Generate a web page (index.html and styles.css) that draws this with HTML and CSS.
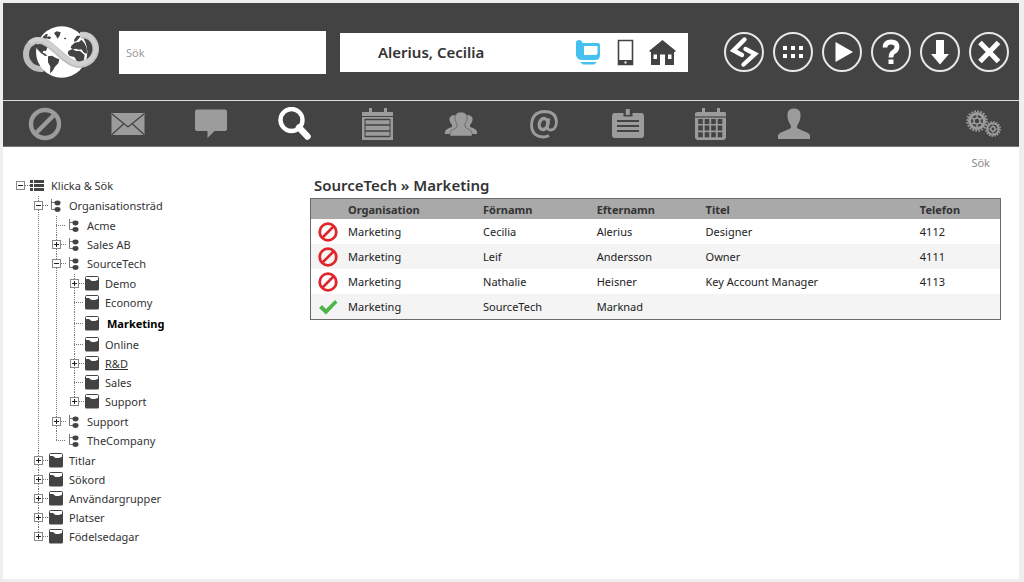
FILE: index.html
```
<!DOCTYPE html>
<html lang="sv">
<head>
<meta charset="utf-8">
<meta name="viewport" content="width=device-width, initial-scale=1">
<title>SourceTech – Klicka &amp; Sök</title>
<link rel="stylesheet" href="styles.css">
</head>
<body>
<svg class="sprite" aria-hidden="true">
  <symbol id="folder" viewBox="0 0 15 15"><path d="M1.500 4V1.500Q1.500 .5 2.500 .5h11q1 0 1 1V6" fill="#fff" stroke="#434343"/><path d="M1 3h4l2.500 2H11l4-1.500V13q0 1.500-1.500 1.500h-11Q1 14.500 1 13z" fill="#434343"/></symbol>
  <symbol id="branch" viewBox="0 0 15 15"><path d="M3.500 1v10.500H7M3.500 4.500H7" fill="none" stroke="#777"/><ellipse cx="9.500" cy="5" rx="3" ry="2.400" fill="#434343"/><ellipse cx="9.500" cy="11.500" rx="3" ry="2.400" fill="#434343"/></symbol>
  <symbol id="deny" viewBox="0 0 20 20"><circle cx="10" cy="10" r="8.300" fill="none" stroke="#e0262d" stroke-width="2.800"/><path d="M4.500 15.500l11-11" stroke="#e0262d" stroke-width="2.600"/></symbol>
</svg>
<div class="frame">
  <header class="header">
    <a class="logo" href="#" aria-label="Start">
      <svg viewBox="36 36 234 162">
        <path d="M100 168C70 170 48 150 48 124 48 98 66 82 88 82" fill="none" stroke="#bdbdbd" stroke-width="18"/>
        <circle cx="155" cy="117" r="77" fill="#fff"/>
        <g fill="#434343">
          <path d="M78 96Q92 88 112 92l8 6-8 6-4 10-8-1-2 6 8 3 6 7-8-1-12-9-10-10-4-6z"/>
          <path d="M98 72l10-9 6 1-4 8 8-2 6 4-6 5-8-3-10 5z"/>
          <path d="M132 60l8-5 12 3-3 10-6 9-5-8z"/>
          <path d="M114 130l12-2 12 7 10 4-3 12-10 10-8 14-7 6 1-20-7-13z"/>
          <path d="M192 80l9-12 12 0-6 8-8 9-6 1z"/>
          <path d="M184 98l10-9 14-3 6-6 9 10 7 14 1 18-9-3-8-10-8 1-8-3-8 2-8-4z"/>
          <path d="M175 114l12-6 11 6 12 0 14 12-2 14-9 10-12-5-8-13-14-3-6-8z"/>
          <path d="M163 74l6 1-2 4-5-1z"/>
        </g>
        <path d="M211 67C246 62 259 92 257 112 253 142 226 158 200 154 160 148 125 84 88 82 76 81 66 86 60 93" fill="none" stroke="#c0c0c0" stroke-width="20"/>
        <path d="M211 66C246 61 259 92 257 111 253 140 226 156 200 152 160 146 125 82 88 80 76 79 66 84 60 91" fill="none" stroke="#d0d0d0" stroke-width="12"/>
      </svg>
    </a>
    <input class="search" type="search" placeholder="Sök" aria-label="Sök">
    <div class="user">
      <span class="user-name">Alerius, Cecilia</span>
      <button class="plain" type="button" aria-label="Telefon"><svg width="27" height="27" viewBox="0 0 27 27"><path d="M4 1q3 0 3.500 3H23q2 0 2 2v10q0 5-5 5H7q-5 0-6-5V4q0-3 3-3z" fill="#45c1f0"/><path d="M9 7h13.500v7q0 2-2 2H9z" fill="#fff"/><path d="M5 23h17l-3 2.500H8z" fill="#45c1f0"/></svg></button>
      <button class="plain" type="button" aria-label="Mobil"><svg width="17" height="27" viewBox="0 0 17 27"><path d="M1.500 1.500h14v24h-14z" fill="#fff" stroke="#434343" stroke-width="1.600"/><path d="M1 21h15v5H1z" fill="#434343"/><path d="M7.500 22.500h2v2h-2z" fill="#fff"/></svg></button>
      <button class="plain" type="button" aria-label="Hem"><svg width="27" height="27" viewBox="0 0 27 27"><path d="M13.500 1L27 12l-1.500 1H25v13h-9V15.500h-5V26H2V13h-.5L0 12z" fill="#434343"/><path d="M4.500 15.500H8V20H4.500zM19 15.500h3.500V20H19z" fill="#fff"/></svg></button>
    </div>
    <div class="actions">
      <button class="round" type="button" aria-label="SourceTech"><svg viewBox="0 0 40 40"><path d="M20.500 7.500L9.500 18.500l8.500 4.500M19.500 32.500l11.500-10.500-9.500-5" fill="none" stroke="#fff" stroke-width="4.400" stroke-linecap="round"/></svg></button>
      <button class="round" type="button" aria-label="Knappsats"><svg viewBox="0 0 40 40"><path d="M10 14h4v4h-4zm8 0h4v4h-4zm8 0h4v4h-4zM10 22h4v4h-4zm8 0h4v4h-4zm8 0h4v4h-4z" fill="#fff"/></svg></button>
      <button class="round" type="button" aria-label="Spela"><svg viewBox="0 0 40 40"><path d="M13.500 10L31 20 13.500 30z" fill="#fff"/></svg></button>
      <button class="round" type="button" aria-label="Hjälp"><svg viewBox="0 0 40 40"><path d="M14 15.500q0-5.500 6-5.500t6 5q0 3-3.500 5Q20 21.500 20 25.500" fill="none" stroke="#fff" stroke-width="4.800"/><path d="M17.500 27.500h5v4.500h-5z" fill="#fff"/></svg></button>
      <button class="round" type="button" aria-label="Ladda ner"><svg viewBox="0 0 40 40"><path d="M16 8h8v14h5l-9 10.500L11 22h5z" fill="#fff"/></svg></button>
      <button class="round" type="button" aria-label="Stäng"><svg viewBox="0 0 40 40"><path d="M11 10.500l18.500 19M29.500 10.500l-18.500 19" stroke="#fff" stroke-width="5"/></svg></button>
    </div>
  </header>
  <nav class="nav" aria-label="Huvudmeny">
    <a href="#" aria-label="Hänvisning"><svg viewBox="0 0 34 34"><circle cx="17" cy="17" r="14" fill="none" stroke="currentColor" stroke-width="4.400"/><path d="M8.500 25.500l17-17" stroke="currentColor" stroke-width="4.400"/></svg></a>
    <a href="#" aria-label="Meddelande"><svg viewBox="0 0 34 34"><path d="M.5 6h33v22H.5z" fill="currentColor"/><path d="M1 7l16 13L33 7M1 27.500l12-11M33 27.500l-12-11" fill="none" stroke="#434343" stroke-width="1.300"/></svg></a>
    <a href="#" aria-label="Chatt"><svg viewBox="0 0 34 34"><path d="M3 2.500h28q2 0 2 2V22q0 2-2 2H20.500L13.500 31v-7H3q-2 0-2-2V4.500q0-2 2-2z" fill="currentColor"/></svg></a>
    <a class="current" href="#" aria-label="Sök" aria-current="page"><svg viewBox="0 0 34 34"><circle cx="13.500" cy="13" r="11" fill="none" stroke="currentColor" stroke-width="4.400"/><path d="M21 20.500L29.500 29.500" stroke="currentColor" stroke-width="6.500" stroke-linecap="round"/></svg></a>
    <a href="#" aria-label="Lista"><svg viewBox="0 0 34 34"><path d="M1 5h31v28H1zM8 1h3v4H8zM23 1h3v4h-3z" fill="currentColor"/><path d="M1 9.500h31" stroke="#434343" stroke-width="1"/><path d="M4 12.500h25M4 18h25M4 24h25M4 29.500h25" stroke="#434343" stroke-width="1.600"/><path d="M4 12v18M29 12v18" stroke="#434343"/></svg></a>
    <a href="#" aria-label="Grupper"><svg viewBox="0 0 34 34"><path d="M1 27q-1-4 4-6l3-1v-2q-4-5-2-8 4-4 8 0v13l-4 4zM33 27q1-4-4-6l-3-1v-2q4-5 2-8-4-4-8 0v13l4 4z" fill="currentColor"/><path d="M6 29q-1-5 4-7l3-2v-3q-3-4-2-8Q12 5 17 5t6 4q1 4-2 8v3l3 2q5 2 4 7z" fill="currentColor" stroke="#434343" stroke-width=".5"/></svg></a>
    <a href="#" aria-label="E-post"><svg viewBox="0 0 34 34"><path d="M22 28.500Q19.500 30 16 30 4.500 29 4.500 18 5 5 17.500 4.500 29 4.500 29.500 15q-.5 8-6 8-3.500 0-3-4l1.500-7.500" fill="none" stroke="currentColor" stroke-width="2.800"/><ellipse cx="16.500" cy="17" rx="4.200" ry="5.600" transform="rotate(15 16.500 17)" fill="none" stroke="currentColor" stroke-width="3.400"/></svg></a>
    <a href="#" aria-label="Bricka"><svg viewBox="0 0 34 34"><path d="M4 6h26q3 0 3 3v19q0 3-3 3H4q-3 0-3-3V9q0-3 3-3z" fill="currentColor"/><path d="M12.500 5h9v4.500h-9z" fill="#434343"/><path d="M14.800 2h4v6h-4z" fill="currentColor"/><path d="M6 14h22M6 19h22M6 24h22" stroke="#434343" stroke-width="2"/></svg></a>
    <a href="#" aria-label="Kalender"><svg viewBox="0 0 34 34"><path d="M3 5h28l1 1v25l-2 2H3l-2-2V6zM8 1h3v4H8zM23 1h3v4h-3z" fill="currentColor"/><path d="M1 10h31" stroke="#434343" stroke-width="1.200"/><path d="M6.500 12v19M13 12v19M19.500 12v19M26 12v19" stroke="#434343" stroke-width="4.600" stroke-dasharray="5 1.600"/></svg></a>
    <a href="#" aria-label="Profil"><svg viewBox="0 0 34 34"><path d="M1 32v-4l2-2 9-4q3-1 1.500-4-3.500-5-3-11 .5-5.500 6.500-5.500t6.500 5.500q.5 6-3 11Q19 21 22 22l9 4 2 2v4z" fill="currentColor"/></svg></a>
    <a class="settings" href="#" aria-label="Inställningar"><svg viewBox="0 0 36 34"><g fill="none" stroke="currentColor"><circle cx="12" cy="14" r="7.500" stroke-width="3"/><circle cx="12" cy="14" r="9.800" stroke-width="2" stroke-dasharray="1.700 1.380"/><circle cx="12" cy="14" r="3" stroke-width="1.500"/><path d="M12 11V7M12 17v4M9.400 12.500L6 10.500M14.600 12.500l3.400-2M9.400 15.500L6 17.500M14.600 15.500l3.400 2" stroke-width="1.500"/><circle cx="28" cy="22" r="5.700" stroke-width="2"/><circle cx="28" cy="22" r="7.200" stroke-width="1.500" stroke-dasharray="1.500 1.330"/><circle cx="28" cy="22" r="2.200" stroke-width="1.500"/><path d="M28 16v4M28 24v4M22 22h4M30 22h4"/></g></svg></a>
  </nav>
  <div class="subbar"><a href="#">Sök</a></div>
  <main class="main">
    <nav class="tree" aria-label="Klicka &amp; Sök">
      <ul>
        <li>
          <div class="row"><button class="toggle" type="button" aria-expanded="true" aria-label="Fäll ihop"></button><i class="stub"></i><svg class="icon" viewBox="0 0 15 15"><path d="M0 2h3v3H0zM4 2h10v3H4zM0 6h3v3H0zM4 6h10v3H4zM0 10h3v3H0zM4 10h10v3H4z" fill="#434343"/></svg><a href="#">Klicka &amp; Sök</a></div>
          <ul>
            <li>
              <div class="row"><button class="toggle" type="button" aria-expanded="true" aria-label="Fäll ihop"></button><i class="stub"></i><svg class="icon"><use href="#branch"/></svg><a href="#">Organisationsträd</a></div>
              <ul>
                <li><div class="row"><i class="stub leaf"></i><svg class="icon"><use href="#branch"/></svg><a href="#">Acme</a></div></li>
                <li><div class="row"><button class="toggle" type="button" aria-expanded="false" aria-label="Fäll ut"></button><i class="stub"></i><svg class="icon"><use href="#branch"/></svg><a href="#">Sales AB</a></div></li>
                <li>
                  <div class="row"><button class="toggle" type="button" aria-expanded="true" aria-label="Fäll ihop"></button><i class="stub"></i><svg class="icon"><use href="#branch"/></svg><a href="#">SourceTech</a></div>
                  <ul>
                    <li><div class="row"><button class="toggle" type="button" aria-expanded="false" aria-label="Fäll ut"></button><i class="stub"></i><svg class="icon"><use href="#folder"/></svg><a href="#">Demo</a></div></li>
                    <li><div class="row"><i class="stub leaf"></i><svg class="icon"><use href="#folder"/></svg><a href="#">Economy</a></div></li>
                    <li><div class="row selected"><i class="stub leaf"></i><svg class="icon"><use href="#folder"/></svg><a href="#" aria-current="true">Marketing</a></div></li>
                    <li><div class="row"><i class="stub leaf"></i><svg class="icon"><use href="#folder"/></svg><a href="#">Online</a></div></li>
                    <li><div class="row"><button class="toggle" type="button" aria-expanded="false" aria-label="Fäll ut"></button><i class="stub"></i><svg class="icon"><use href="#folder"/></svg><a class="hovered" href="#">R&amp;D</a></div></li>
                    <li><div class="row"><i class="stub leaf"></i><svg class="icon"><use href="#folder"/></svg><a href="#">Sales</a></div></li>
                    <li><div class="row"><button class="toggle" type="button" aria-expanded="false" aria-label="Fäll ut"></button><i class="stub"></i><svg class="icon"><use href="#folder"/></svg><a href="#">Support</a></div></li>
                  </ul>
                </li>
                <li><div class="row"><button class="toggle" type="button" aria-expanded="false" aria-label="Fäll ut"></button><i class="stub"></i><svg class="icon"><use href="#branch"/></svg><a href="#">Support</a></div></li>
                <li><div class="row"><i class="stub leaf"></i><svg class="icon"><use href="#branch"/></svg><a href="#">TheCompany</a></div></li>
              </ul>
            </li>
            <li><div class="row"><button class="toggle" type="button" aria-expanded="false" aria-label="Fäll ut"></button><i class="stub"></i><svg class="icon"><use href="#folder"/></svg><a href="#">Titlar</a></div></li>
            <li><div class="row"><button class="toggle" type="button" aria-expanded="false" aria-label="Fäll ut"></button><i class="stub"></i><svg class="icon"><use href="#folder"/></svg><a href="#">Sökord</a></div></li>
            <li><div class="row"><button class="toggle" type="button" aria-expanded="false" aria-label="Fäll ut"></button><i class="stub"></i><svg class="icon"><use href="#folder"/></svg><a href="#">Användargrupper</a></div></li>
            <li><div class="row"><button class="toggle" type="button" aria-expanded="false" aria-label="Fäll ut"></button><i class="stub"></i><svg class="icon"><use href="#folder"/></svg><a href="#">Platser</a></div></li>
            <li><div class="row"><button class="toggle" type="button" aria-expanded="false" aria-label="Fäll ut"></button><i class="stub"></i><svg class="icon"><use href="#folder"/></svg><a href="#">Födelsedagar</a></div></li>
          </ul>
        </li>
      </ul>
    </nav>
    <section class="content">
      <h1>SourceTech » Marketing</h1>
      <table class="people">
        <colgroup><col class="c-status"><col class="c-org"><col class="c-first"><col class="c-last"><col class="c-title"><col></colgroup>
        <thead><tr><th aria-label="Status"></th><th>Organisation</th><th>Förnamn</th><th>Efternamn</th><th>Titel</th><th>Telefon</th></tr></thead>
        <tbody>
          <tr><td class="status"><svg><use href="#deny"/></svg></td><td>Marketing</td><td>Cecilia</td><td>Alerius</td><td>Designer</td><td>4112</td></tr>
          <tr><td class="status"><svg><use href="#deny"/></svg></td><td>Marketing</td><td>Leif</td><td>Andersson</td><td>Owner</td><td>4111</td></tr>
          <tr><td class="status"><svg><use href="#deny"/></svg></td><td>Marketing</td><td>Nathalie</td><td>Heisner</td><td>Key Account Manager</td><td>4113</td></tr>
          <tr><td class="status"><svg viewBox="0 0 20 20"><path d="M1 11l3-3 4 4 9-9 2.500 2.500L8 17.500z" fill="#4fb548"/></svg></td><td>Marketing</td><td>SourceTech</td><td>Marknad</td><td></td><td></td></tr>
        </tbody>
      </table>
    </section>
  </main>
</div>
</body>
</html>
```
FILE: styles.css
```
* { box-sizing: border-box; }

body {
  margin: 0;
  min-height: 100vh;
  padding: 3px 5px 3px 3px;
  display: flex;
  background: #eee;
  color: #333;
  font: 11px/19px "Noto Sans", "Open Sans", sans-serif;
}

a { color: inherit; text-decoration: none; }
button { padding: 0; border: 0; background: none; cursor: pointer; }
svg { display: block; }
.sprite { position: absolute; width: 0; height: 0; }

.frame { flex: 1; min-width: 0; background: #fff; }

/* Header */
.header {
  display: flex;
  align-items: center;
  padding: 22px 10px 21px 19px;
  background: #434343;
}
.logo { margin-right: 19px; }
.logo svg { width: 78px; height: 54px; }
.search {
  flex: 3 1 207px;
  min-width: 0;
  height: 43px;
  margin-right: 14px;
  padding: 0 7px;
  border: 0;
  border-radius: 0;
  background: #fff;
  color: #333;
  font: inherit;
}
.search::placeholder { color: #999; opacity: 1; }
.user {
  flex: 5 1 348px;
  min-width: 0;
  height: 39px;
  display: flex;
  align-items: center;
  gap: 15px;
  margin-right: 36px;
  padding: 0 12px 0 38px;
  background: #fff;
}
.user-name { flex: 1; font-size: 15px; font-weight: 600; white-space: nowrap; }
.actions { display: flex; gap: 9px; }
.round {
  width: 40px;
  height: 40px;
  border: 2px solid #e8e8e8;
  border-radius: 50%;
}
.round svg { width: 40px; height: 40px; margin: -2px; }

/* Icon navigation */
.nav {
  display: flex;
  height: 47px;
  border-top: 1px solid #ddd;
  border-bottom: 1px solid #777;
  background: #434343;
  color: #9b9b9b;
}
.nav a {
  flex: 0 0 8.2%;
  display: flex;
  align-items: center;
  justify-content: center;
}
.nav svg { width: 34px; height: 34px; }
.nav .current { color: #fff; }
.nav .settings { flex: none; margin: 0 18px 0 auto; }
.nav .settings svg { width: 36px; }

.subbar {
  padding: 6px 29px 4px;
  color: #888;
  text-align: right;
}

/* Body */
.main { display: grid; grid-template-columns: 294px 1fr; padding: 0 18px 0 13px; }

.tree ul { list-style: none; margin: 0; padding: 0; }
.tree ul ul { padding: 1px 0 1px 18px; }
.tree ul ul > li {
  background: repeating-linear-gradient(#777 0 1px, transparent 1px 2px) 4px 0 / 1px 100% no-repeat;
}
.tree ul ul > li:last-child { background-size: 1px 10px; }
.row { display: flex; align-items: center; height: 19px; }
.row a { margin-left: 6px; white-space: nowrap; }
.selected { height: 23px; }
.selected a { margin-left: 8px; color: #000; font-weight: 700; }
.hovered { text-decoration: underline; }
.icon { width: 15px; height: 15px; }

.toggle {
  width: 9px;
  height: 9px;
  border: 1px solid #888;
  background:
    linear-gradient(#222, #222) center / 5px 1px no-repeat,
    #fff;
}
.toggle[aria-expanded="false"] {
  background:
    linear-gradient(#222, #222) center / 5px 1px no-repeat,
    linear-gradient(#222, #222) center / 1px 5px no-repeat,
    #fff;
}
.stub {
  width: 5px;
  height: 1px;
  background: repeating-linear-gradient(90deg, #777 0 1px, transparent 1px 2px);
}
.leaf { width: 10px; margin-left: 4px; }

h1 {
  margin: 0 0 3px 4px;
  font-size: 15px;
  font-weight: 600;
  line-height: 19px;
}
.people {
  width: 100%;
  table-layout: fixed;
  border: 1px solid #6a6a6a;
  border-spacing: 0;
  color: #222;
}
.people th {
  height: 20px;
  padding: 0;
  background: #a9a9a9;
  color: #333;
  text-align: left;
}
.people td { height: 25px; padding: 0; white-space: nowrap; }
.people tbody tr:nth-child(even) { background: #f4f4f4; }
.people .status { padding-left: 7px; }
.status svg { width: 20px; height: 20px; }
.c-status { width: 37px; }
.c-org { width: 19.600%; }
.c-first { width: 16.500%; }
.c-last { width: 15.800%; }
.c-title { width: 31.100%; }
```
